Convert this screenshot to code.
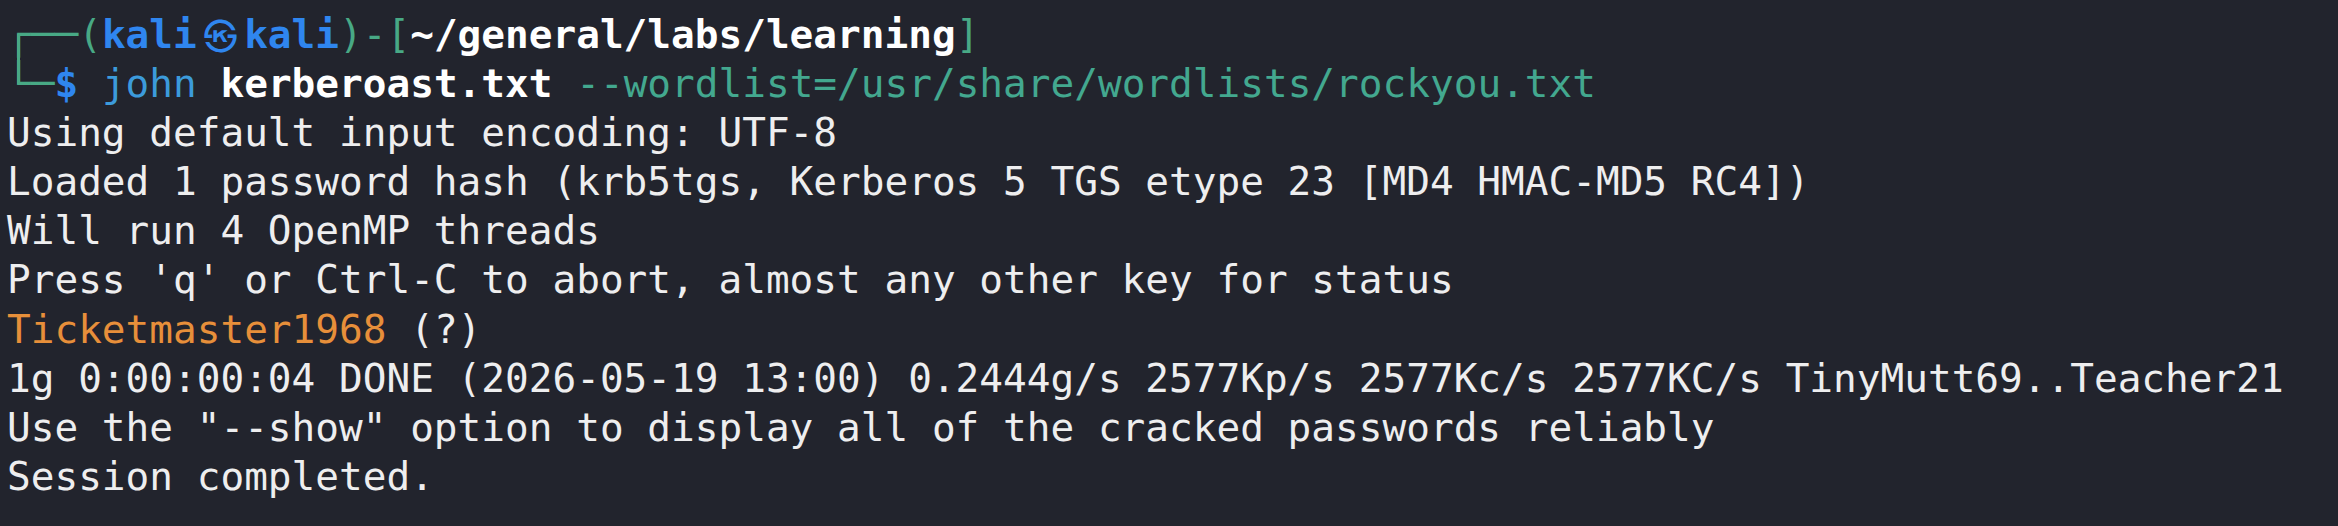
const output = [
  "Using default input encoding: UTF-8",
  "Loaded 1 password hash (krb5tgs, Kerberos 5 TGS etype 23 [MD4 HMAC-MD5 RC4])",
  "Will run 4 OpenMP threads",
  "Press 'q' or Ctrl-C to abort, almost any other key for status",
];

const tail = [
  "1g 0:00:00:04 DONE (2026-05-19 13:00) 0.2444g/s 2577Kp/s 2577Kc/s 2577KC/s TinyMutt69..Teacher21",
  'Use the "--show" option to display all of the cracked passwords reliably',
  "Session completed.",
];

export default function App() {
  return (
    <div className="w-[2338px] h-[526px] bg-[#22242d] text-[#eeeeef] pl-[7px] pt-[10px] overflow-hidden font-['DejaVu_Sans_Mono','Liberation_Mono',monospace] text-[39.4px] leading-[49.1px] whitespace-pre">
      {/* prompt: the vertical bar joins the two corner glyphs */}
      <div className="relative">
        <span className="absolute left-[10px] top-[24px] h-[50px] w-[3px] bg-[#48a985]" />
        <span className="text-[#48a985]">┌──(</span>
        <span className="text-[#2f86ef] font-bold">kali</span>
        <span className="inline-block w-[47.4px] text-center text-[#2f86ef] font-['Noto_Sans_CJK_KR',sans-serif] text-[34px] align-top">㉿</span>
        <span className="text-[#2f86ef] font-bold">kali</span>
        <span className="text-[#48a985]">)-[</span>
        <span className="font-bold text-white">~/general/labs/learning</span>
        <span className="text-[#48a985]">]</span>
      </div>
      <div>
        <span className="text-[#48a985]">└─</span>
        <span className="text-[#2f86ef] font-bold">$</span>
        <span> </span>
        <span className="text-[#3c9bdb]">john</span>
        <span> </span>
        <span className="font-bold text-white">kerberoast.txt</span>
        <span> </span>
        <span className="text-[#43a88f]">--wordlist=/usr/share/wordlists/rockyou.txt</span>
      </div>

      {output.map((line) => (
        <div key={line}>{line}</div>
      ))}
      <div>
        <span className="text-[#e78f3a]">Ticketmaster1968</span> (?)
      </div>
      {tail.map((line) => (
        <div key={line}>{line}</div>
      ))}
    </div>
  );
}
